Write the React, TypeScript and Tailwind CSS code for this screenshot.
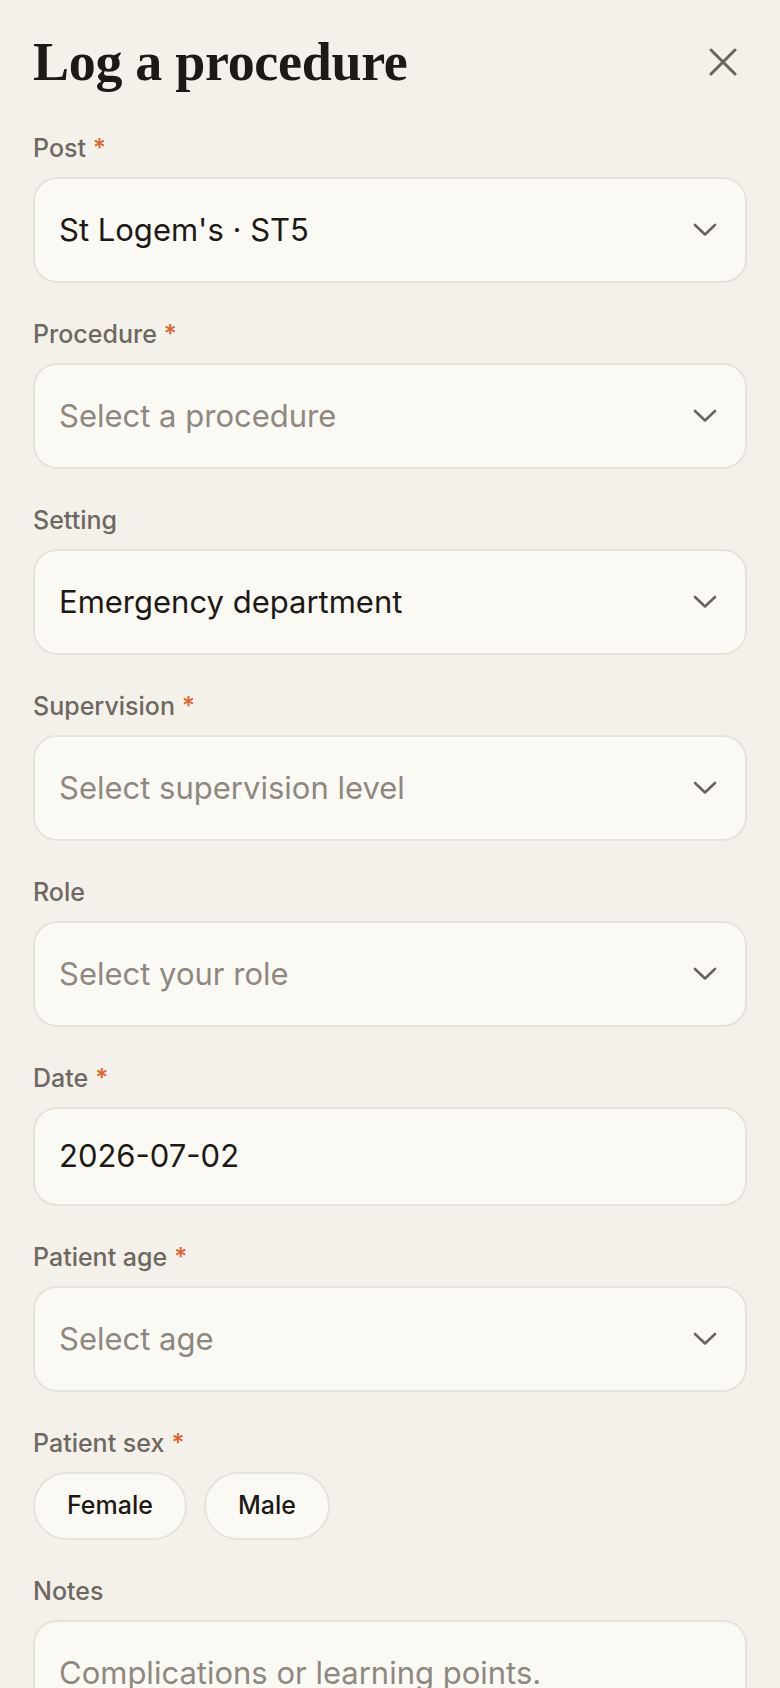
import React from "react";

const Chevron = () => (
  <svg width="24" height="14" viewBox="0 0 24 14" fill="none" className="shrink-0">
    <path d="M2 2 L12 11.5 L22 2" stroke="#6b645d" strokeWidth="2.6" strokeLinecap="round" strokeLinejoin="round" />
  </svg>
);

const Label = ({ text, required }: { text: string; required?: boolean }) => (
  <div className="text-[25px] leading-[32px] font-medium text-[#6f6861]">
    {text}
    {required && <span className="ml-[7px] text-[#e2622b]">*</span>}
  </div>
);

const Select = ({ value, placeholder }: { value?: string; placeholder: string }) => (
  <div className="h-[106px] rounded-[24px] border-2 border-[#e8e3da] bg-[#fbf9f4] pl-[24px] pr-[28px] flex items-center justify-between">
    <span className={value ? "text-[31px] text-[#1d1a16]" : "text-[31px] text-[#8f8880]"}>{value ?? placeholder}</span>
    <Chevron />
  </div>
);

const Field = ({ children }: { children: React.ReactNode }) => (
  <div className="flex flex-col gap-[13px]">{children}</div>
);

export default function App() {
  const font = { fontFamily: "Inter, 'Noto Sans', sans-serif" };
  return (
    <div className="min-h-screen bg-[#f4f1eb] px-[33px] pt-[30px] pb-[40px]" style={font}>
      <div className="h-[64px] flex items-center justify-between">
        <h1 className="text-[54px] font-bold text-[#1d1914] tracking-[-0.3px] leading-none" style={{ fontFamily: "'Liberation Serif', serif" }}>
          Log a procedure
        </h1>
        <button className="w-[40px] h-[40px] flex items-center justify-center mr-[4px]" aria-label="Close">
          <svg width="28" height="28" viewBox="0 0 28 28" fill="none">
            <path d="M2 2 L26 26 M26 2 L2 26" stroke="#6b645d" strokeWidth="3" strokeLinecap="round" />
          </svg>
        </button>
      </div>

      <div className="mt-[38px] flex flex-col gap-[35px]">
        <Field>
          <Label text="Post" required />
          <Select value="St Logem's · ST5" placeholder="" />
        </Field>
        <Field>
          <Label text="Procedure" required />
          <Select placeholder="Select a procedure" />
        </Field>
        <Field>
          <Label text="Setting" />
          <Select value="Emergency department" placeholder="" />
        </Field>
        <Field>
          <Label text="Supervision" required />
          <Select placeholder="Select supervision level" />
        </Field>
        <Field>
          <Label text="Role" />
          <Select placeholder="Select your role" />
        </Field>
        <Field>
          <Label text="Date" required />
          <div className="h-[99px] rounded-[24px] border-2 border-[#e8e3da] bg-[#fbf9f4] pl-[24px] flex items-center">
            <span className="text-[31px] text-[#1d1a16]">2026-07-02</span>
          </div>
        </Field>
        <Field>
          <Label text="Patient age" required />
          <Select placeholder="Select age" />
        </Field>
        <Field>
          <Label text="Patient sex" required />
          <div className="flex gap-[17px]">
            <button className="h-[68px] px-[32px] rounded-full border-2 border-[#e8e3da] bg-[#fbf9f4] text-[25px] font-medium text-[#1d1a16]">
              Female
            </button>
            <button className="h-[68px] px-[32px] rounded-full border-2 border-[#e8e3da] bg-[#fbf9f4] text-[25px] font-medium text-[#1d1a16]">
              Male
            </button>
          </div>
        </Field>
        <Field>
          <Label text="Notes" />
          <div className="h-[200px] rounded-[24px] border-2 border-[#e8e3da] bg-[#fbf9f4] pl-[24px] pt-[28px]">
            <span className="text-[31px] text-[#8f8880]">Complications or learning points.</span>
          </div>
        </Field>
      </div>
    </div>
  );
}
